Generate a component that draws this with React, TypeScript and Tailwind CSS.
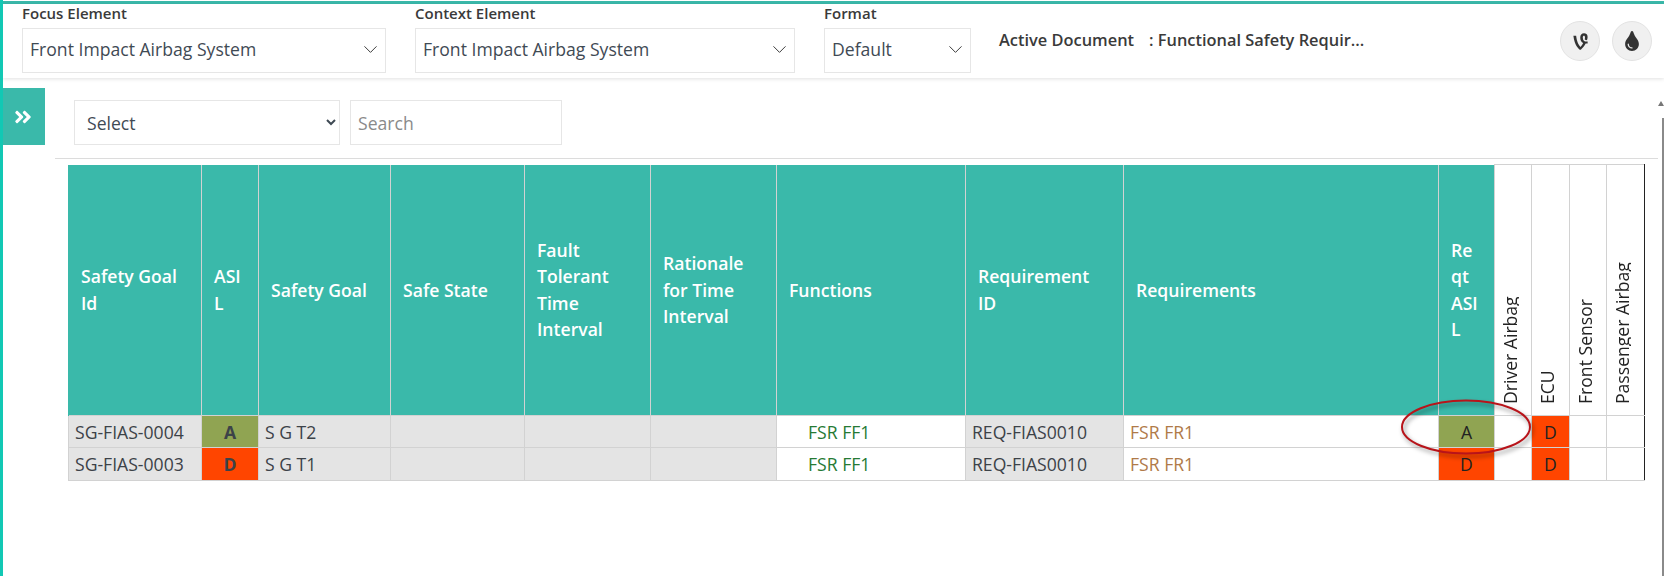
import React from "react";
import { ChevronDown } from "lucide-react";
import { FaAngleDoubleRight, FaTint, FaVine } from "react-icons/fa";

const TEAL = "bg-[#3ab9aa]";

const Dropdown = ({ label, value, width }: { label: string; value: string; width: string }) => (
    <div className={`flex flex-col ${width}`}>
        <label className="-mt-[1px] h-[25px] text-[15px] leading-[20px] font-semibold text-[#3a3a3a]">{label}</label>
        <div className="flex h-[45px] items-center justify-between border border-[#e6e6e6] bg-white pb-[2px] pl-[7px] pr-[3px] text-[17.6px] text-[#3f4a54]">
            <span>{value}</span>
            <ChevronDown size={23} strokeWidth={1} className="text-[#333]" />
        </div>
    </div>
);

const headers = [
    { w: "w-[133px]", lines: "Safety Goal Id" },
    { w: "w-[57px]", lines: "ASI L" },
    { w: "w-[132px]", lines: "Safety Goal" },
    { w: "w-[134px]", lines: "Safe State" },
    { w: "w-[126px]", lines: "Fault Tolerant Time Interval" },
    { w: "w-[126px]", lines: "Rationale for Time Interval" },
    { w: "w-[189px]", lines: "Functions" },
    { w: "w-[158px]", lines: "Requirement ID" },
    { w: "w-[315px]", lines: "Requirements" },
    { w: "w-[56px]", lines: "Re qt ASI L" },
];

const rotated = [
    { w: "w-[37px]", name: "Driver Airbag" },
    { w: "w-[38px]", name: "ECU" },
    { w: "w-[37px]", name: "Front Sensor" },
    { w: "w-[38px]", name: "Passenger Airbag" },
];

const rows = [
    { id: "SG-FIAS-0004", asil: "A", asilBg: "bg-[#90a452]", goal: "S G T2", req: "A", reqBg: "bg-[#90a452]", h: "h-[32px]" },
    { id: "SG-FIAS-0003", asil: "D", asilBg: "bg-[#ff4500]", goal: "S G T1", req: "D", reqBg: "bg-[#ff4500]", h: "h-[33px]" },
];

const cell = "border border-[#d2d2d2] p-0 px-[6px] text-[17.6px] leading-[24px] overflow-hidden whitespace-nowrap";
const dark = "text-[#3c4248]";
const grey = "bg-[#e4e4e4]";

export default function App() {
    return (
        <div className="relative flex h-[576px] w-[1664px] flex-col overflow-hidden border-l-[3px] border-[#12c8b4] bg-white font-['Open_Sans',sans-serif]">
            <div className="mt-[1px] h-[3px] shrink-0 bg-[#3ab9aa]" />
            <header className="flex h-[74px] shrink-0 items-start bg-white pl-[19px] shadow-[0_1px_4px_rgba(0,0,0,0.12)]">
                <Dropdown label="Focus Element" value="Front Impact Airbag System" width="w-[364px]" />
                <div className="ml-[29px]">
                    <Dropdown label="Context Element" value="Front Impact Airbag System" width="w-[380px]" />
                </div>
                <div className="ml-[29px]">
                    <Dropdown label="Format" value="Default" width="w-[147px]" />
                </div>
                <div className="ml-[28px] flex h-[72px] items-center text-[16.4px]">
                    <span className="w-[150px] font-semibold text-[#3a3a3a]">Active Document</span>
                    <span className="font-semibold text-[#3a3a3a]">: Functional Safety Requir...</span>
                </div>
                <div className="ml-auto mr-[12px] mt-[17px] flex gap-[12px]">
                    <button className="flex h-[40px] w-[40px] items-center justify-center rounded-full border border-[#e3e3e3] bg-[#f0f0f0] text-[#333]">
                        <FaVine size={19} />
                    </button>
                    <button className="flex h-[40px] w-[40px] items-center justify-center rounded-full border border-[#e3e3e3] bg-[#f0f0f0] text-[#333]">
                        <FaTint size={20} />
                    </button>
                </div>
            </header>

            <div className="flex min-h-0 flex-1 items-start pt-[10px]">
                <button className={`flex h-[57px] w-[42px] shrink-0 items-start justify-center pr-[2px] pt-[19px] text-white ${TEAL}`}>
                    <FaAngleDoubleRight size={20} />
                </button>
                <main className="ml-[10px] flex w-[1603px] flex-col">
                    <div className="ml-[19px] mt-[12px] flex gap-[10px]">
                        <select className="h-[45px] w-[266px] border border-[#e6e6e6] bg-white pl-[8px] pr-[6px] text-[17.6px] text-[#3f4a54]">
                            <option>Select</option>
                        </select>
                        <input
                            placeholder="Search"
                            className="h-[45px] w-[212px] border border-[#e6e6e6] bg-white px-[7px] text-[17.6px] placeholder:text-[#8a8a8a]"
                        />
                    </div>
                    <div className="mt-[13px] h-[1px] bg-[#dcdcdc]" />
                    <table className="ml-[13px] mt-[5px] w-[1577px] table-fixed border-collapse border-r border-r-[#222]">
                        <colgroup>
                            {headers.map((h, i) => <col key={i} className={h.w} />)}
                            {rotated.map((h, i) => <col key={i} className={h.w} />)}
                        </colgroup>
                        <thead>
                            <tr className="h-[251px]">
                                {headers.map((h, i) => (
                                    <th
                                        key={i}
                                        className={`border-x border-[#d2d2d2] px-[12px] text-left text-[17.6px] leading-[26.5px] font-semibold text-white first:border-l-[#3ab9aa] ${TEAL}`}
                                    >
                                        {h.lines}
                                    </th>
                                ))}
                                {rotated.map((h, i) => (
                                    <th key={i} className="border border-[#d2d2d2] p-0 pb-[11px] pl-[2px] text-left align-bottom font-normal first:border-l-0 last:border-r-[#222]">
                                        <div className="h-[150px] w-[22px] overflow-hidden text-[17.6px] leading-[26px] whitespace-nowrap text-[#222] rotate-180 [writing-mode:vertical-rl]">
                                            {h.name}
                                        </div>
                                    </th>
                                ))}
                            </tr>
                        </thead>
                        <tbody>
                            {rows.map((r) => (
                                <tr key={r.id} className={r.h}>
                                    <td className={`${cell} ${dark} ${grey}`}>{r.id}</td>
                                    <td className={`${cell} ${dark} ${r.asilBg} text-center font-bold`}>{r.asil}</td>
                                    <td className={`${cell} ${dark} ${grey}`}>{r.goal}</td>
                                    <td className={`${cell} ${grey}`} />
                                    <td className={`${cell} ${grey}`} />
                                    <td className={`${cell} ${grey}`} />
                                    <td className={`${cell} pl-[31px] text-[#267a34]`}>FSR FF1</td>
                                    <td className={`${cell} ${dark} ${grey}`}>REQ-FIAS0010</td>
                                    <td className={`${cell} text-[#b07a48]`}>FSR FR1</td>
                                    <td className={`${cell} ${r.reqBg} text-center text-[#222]`}>{r.req}</td>
                                    <td className={cell} />
                                    <td className={`${cell} bg-[#ff4500] text-center text-[#222]`}>D</td>
                                    <td className={cell} />
                                    <td className={`${cell} border-r-[#222]`} />
                                </tr>
                            ))}
                        </tbody>
                    </table>
                </main>
            </div>

            <svg className="pointer-events-none absolute left-[1395px] top-[395px]" width="145" height="70" viewBox="0 0 145 70">
                <defs>
                    <filter id="ring-shadow" x="-10%" y="-20%" width="120%" height="140%">
                        <feGaussianBlur stdDeviation="2" />
                    </filter>
                </defs>
                <ellipse cx="70" cy="35" rx="64" ry="26.5" fill="none" stroke="#000" strokeOpacity="0.3" strokeWidth="3" filter="url(#ring-shadow)" />
                <ellipse cx="68" cy="32" rx="64" ry="26.5" fill="none" stroke="#b8141a" strokeWidth="2" />
            </svg>
            <div className="absolute right-0 top-[101px] h-0 w-0 border-x-[3px] border-b-[5px] border-x-transparent border-b-[#777]" />
            <div className="absolute right-0 top-[118px] h-[458px] w-[2px] bg-[#8a8a8a]" />
        </div>
    );
}
